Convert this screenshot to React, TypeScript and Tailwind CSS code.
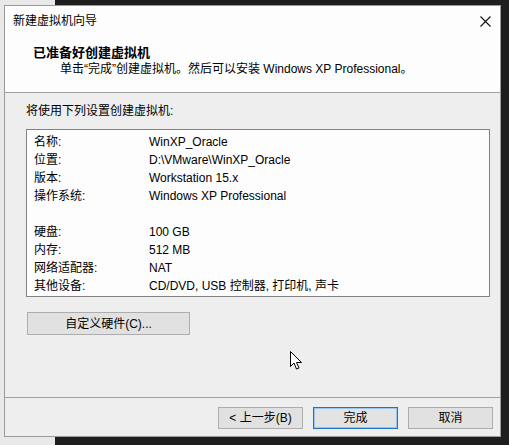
const settings = [
  { label: "名称:", value: "WinXP_Oracle" },
  { label: "位置:", value: "D:\\VMware\\WinXP_Oracle" },
  { label: "版本:", value: "Workstation 15.x" },
  { label: "操作系统:", value: "Windows XP Professional" },
  { label: "", value: "" },
  { label: "硬盘:", value: "100 GB" },
  { label: "内存:", value: "512 MB" },
  { label: "网络适配器:", value: "NAT" },
  { label: "其他设备:", value: "CD/DVD, USB 控制器, 打印机, 声卡" },
];

function Button({ label, primary }: { label: string; primary?: boolean }) {
  return (
    <button
      className={
        primary
          ? "w-[85px] h-[22px] border border-[#1f74c8] shadow-[inset_0_0_0_1px_#9cc6ee] bg-[#e3e3e3] text-[12px] leading-none"
          : "w-[85px] h-[22px] border border-[#adadad] bg-[#e1e1e1] text-[12px] leading-none"
      }
    >
      {label}
    </button>
  );
}

export default function App() {
  return (
    <div className="w-[509px] h-[445px] overflow-hidden pl-[4px] pt-[5px] bg-[linear-gradient(to_right,#e9e9e9_55px,#1e1e1e_55px)] font-['Liberation_Sans','Noto_Sans_CJK_SC',sans-serif] text-black text-[12px]">
      <div className="relative w-[497px] h-[432px] border border-[#9a9a9a] bg-[#eeeeee] flex flex-col">
        {/* header */}
        <div className="bg-[#fdfdfd] h-[86px] flex flex-col">
          <div className="h-[30px] flex items-center justify-between pl-[8px] pr-[9px]">
            <span>新建虚拟机向导</span>
            <svg width="11" height="11" viewBox="0 0 11 11">
              <path d="M0.5 0.5 L10.5 10.5 M10.5 0.5 L0.5 10.5" stroke="#111" strokeWidth="1.1" />
            </svg>
          </div>
          <div className="mt-[8px] pl-[28px] h-[17px] leading-[17px] text-[13px] font-bold">
            已准备好创建虚拟机
          </div>
          <div className="pl-[55px] h-[17px] leading-[17px]">
            单击“完成”创建虚拟机。然后可以安装 Windows XP Professional。
          </div>
        </div>
        <div className="h-px bg-[#a0a0a0]" />

        {/* body */}
        <div className="flex-1 flex flex-col px-[21px]">
          <div className="mt-[9px] h-[18px] leading-[18px]">将使用下列设置创建虚拟机:</div>
          <div className="mt-[9px] w-[464px] h-[168px] border border-[#828282] bg-[#fdfdfd] pt-[3px] pl-[7px]">
            {settings.map((s, i) => (
              <div key={i} className="flex h-[18px] leading-[18px]">
                <span className="w-[115px]">{s.label}</span>
                <span>{s.value}</span>
              </div>
            ))}
          </div>
          <button className="mt-[15px] ml-[1px] w-[163px] h-[23px] border border-[#adadad] bg-[#e1e1e1] text-[12px] leading-none">
            自定义硬件(C)...
          </button>
        </div>

        <div className="h-px bg-[#a0a0a0]" />
        <div className="h-[38px] flex justify-end items-start gap-[10px] pt-[9px] pr-[7px]">
          <Button label="< 上一步(B)" />
          <Button label="完成" primary />
          <Button label="取消" />
        </div>

        {/* mouse pointer */}
        <svg className="absolute left-[285px] top-[345px]" width="13" height="20" viewBox="0 0 13 20">
          <path
            d="M0.5 0.5 L0.5 15.5 L4 12 L6.5 18 L9 17 L6.5 11.5 L11.5 11.5 Z"
            fill="#fff"
            stroke="#000"
            strokeWidth="1"
            strokeLinejoin="miter"
          />
        </svg>
      </div>
    </div>
  );
}
